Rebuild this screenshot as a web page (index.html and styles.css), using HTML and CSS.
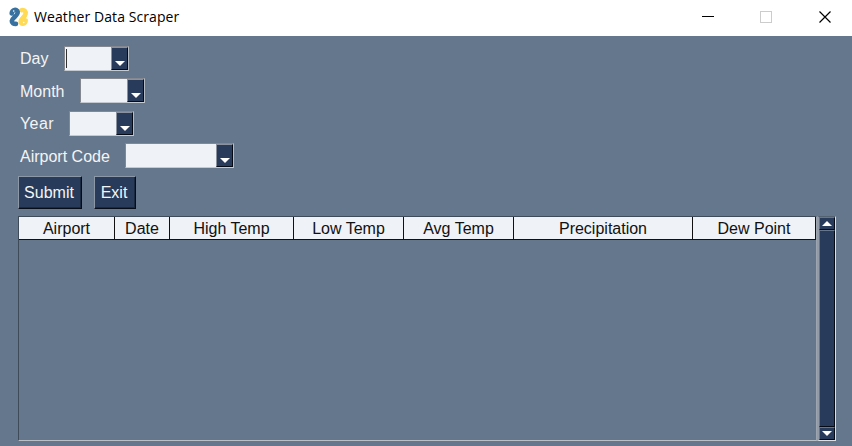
FILE: index.html
```html
<!DOCTYPE html>
<html lang="en">
<head>
<meta charset="utf-8">
<title>Weather Data Scraper</title>
<link rel="stylesheet" href="styles.css">
</head>
<body>
<header class="titlebar">
  <svg class="logo" width="20" height="20" viewBox="0 0 20 20" fill="none" stroke-width="4.600" stroke-linecap="round" stroke-linejoin="round">
    <path stroke="#ffda55" d="M12.500 3.200C15.500 2.500 17 4.500 16.500 7C16 10 12 11.500 11.700 14.500C11.600 17.500 16 17.500 16.700 13.500"/>
    <path stroke="#38719f" d="M2.700 6.500C3 2.500 8 1.500 8.700 5C9 9 3 10.500 2.800 14C2.700 16 4.500 17 7 16.900"/>
    <circle cx="4.700" cy="4" r=".8" fill="#fff"/><circle cx="14.700" cy="15.500" r=".8" fill="#fff"/>
  </svg>
  <span class="title">Weather Data Scraper</span>
  <svg class="controls" width="132" height="16" viewBox="0 0 132 16" fill="none" shape-rendering="crispEdges">
    <path d="M1 7.500H13" stroke="#000"/>
    <rect x="59.500" y="2.500" width="11" height="11" stroke="#ccc"/>
    <path d="M118.500 2.500L129.500 13.500M129.500 2.500L118.500 13.500" stroke="#000" shape-rendering="auto" stroke-width="1.200"/>
  </svg>
</header>
<main class="window">
  <div class="field"><label class="day">Day</label><div class="combo focused"><i class="drop"></i></div></div>
  <div class="field"><label class="month">Month</label><div class="combo"><i class="drop"></i></div></div>
  <div class="field"><label class="year">Year</label><div class="combo"><i class="drop"></i></div></div>
  <div class="field"><label class="code">Airport Code</label><div class="combo wide"><i class="drop"></i></div></div>
  <div class="actions"><button class="submit">Submit</button><button class="exit">Exit</button></div>
  <div class="results">
    <div class="table">
      <div class="head">
        <span>Airport</span><span>Date</span><span>High Temp</span><span>Low Temp</span><span>Avg Temp</span><span>Precipitation</span><span>Dew Point</span>
      </div>
    </div>
    <div class="scrollbar"><i class="arrow up"></i><i class="thumb"></i><i class="arrow down"></i></div>
  </div>
</main>
</body>
</html>
```

FILE: styles.css
```css
* { box-sizing: border-box; }
body {
  margin: 0;
  width: 852px;
  height: 446px;
  overflow: hidden;
  background: #64778d;
  font: 16px/20px "Liberation Sans", sans-serif;
}
.titlebar {
  display: flex;
  align-items: center;
  height: 36px;
  padding: 0 19px 3px 9px;
  background: #fff;
}
.title {
  margin-left: 5px;
  font: 14px/20px "Open Sans", sans-serif;
  letter-spacing: .08px;
  color: #000;
  white-space: nowrap;
}
.controls { margin-left: auto; }
.window { padding: 6px 16px 0 18px; }
.field {
  display: flex;
  align-items: center;
  height: 32.5px;
  padding-left: 2px;
  color: #f4f4f4;
}
.field label {
  padding-top: 2px;
  white-space: nowrap;
}
.day { width: 44px; }
.month { width: 60px; }
.year {
  width: 49px;
  letter-spacing: .4px;
}
.code { width: 105px; }
.combo {
  display: flex;
  justify-content: flex-end;
  width: 65px;
  height: 25px;
  border: 1px solid;
  border-color: #85898f #b5bbc2 #c4cad1 #85898f;
  background: #eff2f7;
}
.combo.wide { width: 109px; }
.combo.focused { background: linear-gradient(#333, #333) 1px 2px / 1px 19px no-repeat #eff2f7; }
.drop {
  display: flex;
  justify-content: center;
  align-items: flex-end;
  width: 17px;
  height: 23px;
  padding-bottom: 3px;
  border: 1px solid;
  border-color: #8b929f #050a15 #050a15 #8b929f;
  background: #283b5b;
}
.drop::after {
  content: "";
  border: 5px solid transparent;
  border-top-color: #fff;
  border-bottom: 0;
}
.actions {
  display: flex;
  gap: 12px;
  height: 33px;
  margin-top: 4px;
}
button {
  height: 33px;
  padding: 1px 2px 0 0;
  border: 1px solid;
  border-color: #8c98a8 #060c18 #060c18 #8c98a8;
  box-shadow: inset -1px -1px #1b2940;
  background: #283b5b;
  color: #f4f4f4;
  font: inherit;
}
.submit { width: 64px; }
.exit { width: 42px; }
.results {
  display: flex;
  height: 225px;
  margin-top: 7px;
}
.table {
  width: 799px;
  border: 1px solid;
  border-color: #3f4b59 #9da5b0 #b9bfc7 #3f4b59;
}
.head {
  display: grid;
  grid-template-columns: 96px 55px 124px 110px 110px 179px 123px;
  grid-template-rows: 23px;
  height: 23px;
  line-height: 24px;
  color: #111;
}
.head span {
  background: #eff2f7;
  border-right: 1px solid #111;
  border-bottom: 1px solid #111;
  text-align: center;
  white-space: nowrap;
}
.scrollbar {
  display: flex;
  flex-direction: column;
  width: 19px;
  height: 225px;
  border: 1px solid;
  border-color: #536171 #dce0e5 #dce0e5 #929ba7;
  border-left-width: 2px;
  background: #283b5b;
}
.arrow {
  display: flex;
  flex: none;
  justify-content: center;
  align-items: center;
  height: 13px;
  border: 1px solid;
  border-color: #68768b #050a15 #050a15 #68768b;
}
.arrow::after {
  content: "";
  border: 5px solid transparent;
}
.up::after { border-bottom-color: #fff; border-top: 0; }
.down::after { border-top-color: #fff; border-bottom: 0; }
.thumb {
  flex: 1;
  border: 1px solid;
  border-color: #68768b #050a15 #050a15 #68768b;
}
```
